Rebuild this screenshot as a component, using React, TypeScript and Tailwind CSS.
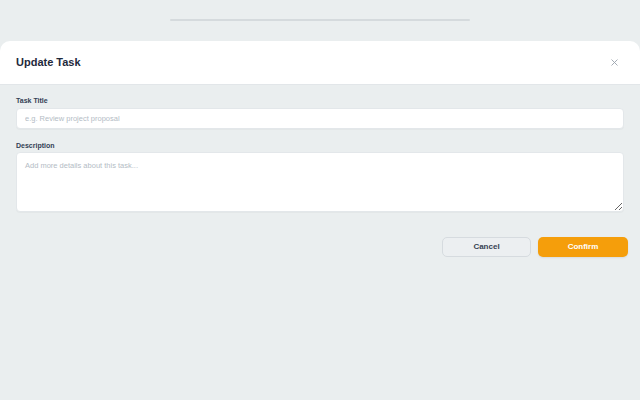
export default function App() {
	return (
		<div
			className="w-[640px] h-[400px] bg-[#eaeeef] overflow-hidden"
			style={{ fontFamily: '"Liberation Sans", Arial, sans-serif' }}
		>
			<div className="pt-[19px] flex justify-center">
				<div className="w-[300px] h-[2px] bg-[#d5dadd] rounded-full" />
			</div>

			<div className="mt-[20px] h-[44px] bg-white rounded-t-[10px] border-b border-[#e2e6e9] flex items-center justify-between px-4">
				<h1 className="text-[11px] font-bold text-[#1e293b]">Update Task</h1>
				<button className="w-4 h-4 flex items-center justify-center text-[#9aa3ad] mr-[2px]">
					<svg width="7" height="7" viewBox="0 0 7 7" fill="none" stroke="currentColor" strokeWidth="0.9">
						<path d="M0.5 0.5L6.5 6.5M6.5 0.5L0.5 6.5" />
					</svg>
				</button>
			</div>

			<div className="px-4 pt-[11px]">
				<label className="block text-[7px] font-bold text-[#334155] leading-[10px] mb-[2px]">
					Task Title
				</label>
				<input
					className="block w-full h-[21px] bg-white rounded-[4px] border border-[#e3e7ea] shadow-[0_1px_1px_rgba(0,0,0,0.03)] px-[8px] text-[7.5px] text-[#334155] placeholder:text-[#b4bcc5] outline-none"
					placeholder="e.g. Review project proposal"
				/>

				<label className="block mt-[12px] text-[7px] font-bold text-[#334155] leading-[10px] mb-[1px]">
					Description
				</label>
				<textarea
					className="block w-full h-[60px] bg-white rounded-[4px] border border-[#e3e7ea] shadow-[0_1px_1px_rgba(0,0,0,0.03)] px-[8px] py-[7px] text-[7.5px] text-[#334155] placeholder:text-[#b4bcc5] outline-none"
					placeholder="Add more details about this task..."
				/>
			</div>

			<div className="flex justify-end gap-[7px] pr-[12px] mt-[25px]">
				<button className="w-[89px] h-[20px] rounded-[5px] bg-[#eceff1] border border-[#d6dbdf] text-[8px] font-bold text-[#374151]">
					Cancel
				</button>
				<button className="w-[90px] h-[20px] rounded-[5px] bg-[#f59e0b] text-[8px] font-bold text-white shadow-[0_1px_2px_rgba(0,0,0,0.08)]">
					Confirm
				</button>
			</div>
		</div>
	);
}
